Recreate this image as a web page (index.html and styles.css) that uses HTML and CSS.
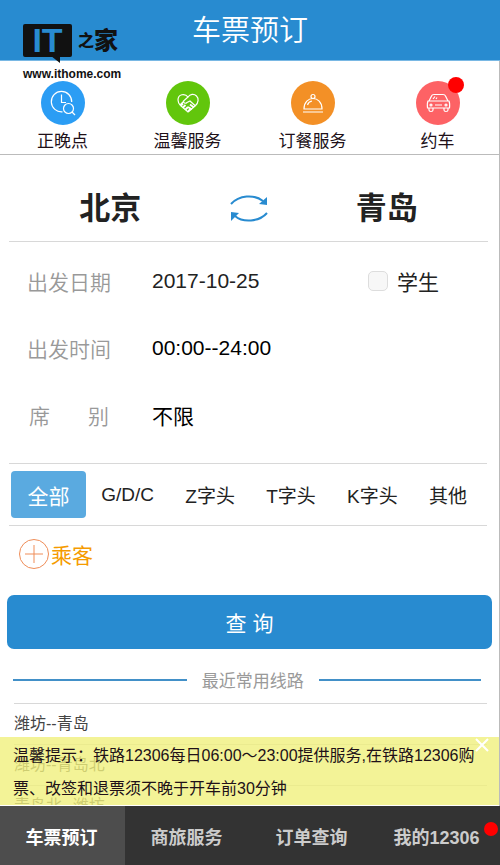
FILE: index.html
```html
<!DOCTYPE html>
<html lang="zh-CN">
<head>
<meta charset="utf-8">
<meta name="viewport" content="width=device-width, initial-scale=1">
<title>车票预订</title>
<link rel="stylesheet" href="styles.css">
</head>
<body>
<div class="app">
  <header class="header">
    <h1>车票预订</h1>
    <div class="brand">
      <div class="brand-row">
        <div class="brand-box">IT</div>
        <div class="brand-name"><span>之</span><b>家</b></div>
      </div>
      <div class="brand-url">www.ithome.com</div>
    </div>
  </header>

  <nav class="services" aria-label="服务">
    <a class="service" href="#">
      <span class="disc blue">
        <svg viewBox="0 0 44 44"><path d="M21.500 30.800A10.200 10.200 0 1 1 30.700 21"/><path d="M20.500 13.500V21.500H25"/><circle cx="27.500" cy="27.500" r="5"/><path d="M31 31L34 34"/></svg>
      </span>
      <span>正晚点</span>
    </a>
    <a class="service" href="#">
      <span class="disc green">
        <svg viewBox="0 0 44 44"><path d="M22 16C19 12 12 13 12 19C12 21 13 23 14.500 24.500L22 31L29.500 24.500C32.500 21.500 33 17.500 30.500 15C28 12.500 24 13 22 16Z"/><path d="M22 16L17.500 20C17 22 19.500 23 21 21.500L24 20L29.500 25M14 24L18 20"/><path class="thick" d="M15 24.500L17 22.500M17 26.500L19.500 24M19.500 28.500L22 26M22 30.500L24.500 28M24 23.500L28 26.500M22 26L26 28.500"/></svg>
      </span>
      <span>温馨服务</span>
    </a>
    <a class="service" href="#">
      <span class="disc orange">
        <svg viewBox="0 0 44 44"><circle cx="22" cy="15.500" r="2"/><path d="M13 28C13 14 31 14 31 28ZM16.500 24C17 22 18.500 20.500 21 20M12 31H32"/></svg>
      </span>
      <span>订餐服务</span>
    </a>
    <a class="service" href="#">
      <span class="disc pink">
        <svg viewBox="0 0 44 44"><path d="M13 20L15.500 15Q16 13.500 18 13.500H27Q29 13.500 29.500 15L32 20M12 20H33Q34 22 33.500 27H11.500Q11 22 12 20ZM13 27V29Q13 30.500 15 30.500Q17 30.500 17 29V27M28 27V29Q28 30.500 30 30.500Q32 30.500 32 29V27M19 24H26M17 18L19 15.500M20 18L21 16.500"/><circle cx="15" cy="24" r="1"/><circle cx="30" cy="24" r="1"/></svg>
        <i class="dot"></i>
      </span>
      <span>约车</span>
    </a>
  </nav>

  <main class="content">
    <section class="cities">
      <button class="city" type="button">北京</button>
      <button class="swap" type="button" aria-label="交换">
        <svg viewBox="0 0 40 30"><path d="M2 10C10 1 25 0 34 7"/><path d="M38 19C30 28 14 29 6 22"/><path class="head" d="M38 3V11L30 10ZM2 27V18L10 19Z"/></svg>
      </button>
      <button class="city" type="button">青岛</button>
    </section>

    <section class="fields">
      <div class="field">
        <span class="name">出发日期</span><span class="value soft">2017-10-25</span>
        <label class="student"><input type="checkbox">学生</label>
      </div>
      <div class="field"><span class="name">出发时间</span><span class="value">00:00--24:00</span></div>
      <div class="field"><span class="name split"><span>席</span><span>别</span></span><span class="value">不限</span></div>
    </section>

    <section class="types">
      <button class="type selected" type="button">全部</button>
      <button class="type" type="button">G/D/C</button>
      <button class="type" type="button">Z字头</button>
      <button class="type" type="button">T字头</button>
      <button class="type" type="button">K字头</button>
      <button class="type" type="button">其他</button>
    </section>

    <button class="passenger" type="button">
      <svg viewBox="0 0 32 32"><circle cx="16" cy="16" r="14.500"/><path d="M7 16H25M16 7V25"/></svg>乘客
    </button>

    <button class="search" type="button">查 询</button>

    <h2 class="recent">最近常用线路</h2>
    <ul class="routes">
      <li><a href="#">潍坊--青岛</a></li>
      <li><a href="#">潍坊--青岛北</a></li>
      <li><a href="#">青岛北--潍坊</a></li>
    </ul>

    <aside class="notice">
      <p>温馨提示：铁路12306每日06:00～23:00提供服务,在铁路12306购<br>票、改签和退票须不晚于开车前30分钟</p>
      <button class="close" type="button" aria-label="关闭"><svg viewBox="0 0 16 16"><path d="M2 2L14 14M14 2L2 14"/></svg></button>
    </aside>
  </main>

  <nav class="tabbar" aria-label="主导航">
    <a class="current" href="#">车票预订</a>
    <a href="#">商旅服务</a>
    <a href="#">订单查询</a>
    <a href="#">我的12306<i class="dot"></i></a>
  </nav>
</div>
</body>
</html>
```
FILE: styles.css
```css
* { box-sizing: border-box; }
body {
  margin: 0;
  background: #fff;
  color: #222;
  font-family: "Liberation Sans", "Noto Sans CJK SC", sans-serif;
}
button {
  padding: 0;
  border: 0;
  background: none;
  color: inherit;
  font: inherit;
}
a { color: inherit; text-decoration: none; }
svg { display: block; fill: none; stroke: #fff; }

.app {
  display: flex;
  flex-direction: column;
  height: 100vh;
  border-right: 1px solid #bbb;
}
.header {
  position: relative;
  flex: none;
  height: 61px;
  margin-right: -1px;
  background: #288bd0;
  border-bottom: 1px solid #79b8e4;
  color: #fff;
}
.header h1 {
  margin: 0;
  font-size: 29px;
  font-weight: 350;
  line-height: 62px;
  text-align: center;
}
.brand { position: absolute; top: 24px; left: 23px; color: #111; }
.brand-row { display: flex; gap: 6px; height: 40px; }
.brand-box {
  position: relative;
  width: 49px;
  height: 33px;
  border-radius: 2px;
  background: #111;
  color: #288bd0;
  font-size: 34px;
  font-weight: bold;
  line-height: 33px;
  text-align: center;
}
.brand-box::after {
  content: "";
  position: absolute;
  top: 32px;
  right: 12px;
  border-top: 7px solid #111;
  border-left: 9px solid transparent;
}
.brand-name { display: flex; align-items: center; height: 34px; font-weight: 900; line-height: 34px; }
.brand-name span { font-size: 16px; }
.brand-name b { font-size: 24px; }
.brand-url { font-size: 12px; font-weight: bold; line-height: 20px; }

.services {
  display: grid;
  grid-template-columns: repeat(4, 1fr);
  flex: none;
  height: 94px;
  margin-right: -1px;
  padding-top: 20px;
  border-bottom: 1px solid #bbb;
}
.service {
  display: flex;
  flex-direction: column;
  align-items: center;
  gap: 5px;
  color: #201018;
  font-size: 17px;
  line-height: 24px;
}
.disc { position: relative; width: 44px; height: 44px; border-radius: 50%; }
.disc svg { stroke-width: 1.2; }
.disc .thick { stroke-width: 1.8; }
.blue { background: #2b9df4; }
.green { background: #62c60c; }
.orange { background: #f39026; }
.pink { background: #fd6265; }
.dot {
  position: absolute;
  top: -4px;
  right: -4px;
  width: 16px;
  height: 16px;
  border-radius: 50%;
  background: #f00;
}

.content { position: relative; flex: 1; min-height: 0; overflow: hidden; }
.cities {
  display: grid;
  grid-template-columns: 1fr 74px 1fr;
  align-items: center;
  height: 87px;
  margin: 0 11px 0 9px;
  padding-top: 22px;
  border-bottom: 1px solid #d8d8d8;
}
.city { font-size: 31px; font-weight: bold; line-height: 46px; }
.swap { justify-self: center; width: 40px; height: 30px; }
.swap svg { stroke: #288bd0; stroke-width: 2; }
.swap .head { fill: #288bd0; stroke: none; }

.fields { padding: 5px 27px 15px; font-size: 21px; }
.field { display: flex; align-items: center; height: 67px; }
.name { width: 125px; color: #999; font-weight: 350; }
.split { display: flex; gap: 38px; padding-left: 2px; }
.value { flex: 1; color: #000; }
.field .soft { color: #222; }
.student { display: flex; align-items: center; gap: 9px; width: 104px; }
.student input {
  appearance: none;
  width: 20px;
  height: 20px;
  margin: 0;
  border: 1px solid #ddd;
  border-radius: 5px;
  background: #f7f7f7;
}

.types {
  display: flex;
  justify-content: space-between;
  align-items: center;
  height: 63px;
  margin: 0 12px 0 9px;
  padding: 0 20px 0 2px;
  border-top: 1px solid #d8d8d8;
  border-bottom: 1px solid #d8d8d8;
  font-size: 19px;
}
.selected {
  width: 75px;
  height: 47px;
  margin-right: -16px;
  border-radius: 4px;
  background: #5aaae0;
  color: #fff;
  font-size: 21px;
}
.passenger {
  display: flex;
  align-items: center;
  gap: 1px;
  height: 56px;
  padding-left: 18px;
  color: #f59b00;
  font-size: 21px;
}
.passenger svg { width: 32px; height: 32px; stroke: #ef8d58; }
.search {
  display: block;
  width: calc(100% - 14px);
  height: 54px;
  margin: 13px 7px 0;
  border-radius: 7px;
  background: #288bd0;
  color: #fff;
  font-size: 21px;
}
.recent {
  display: flex;
  align-items: center;
  gap: 15px;
  height: 54px;
  margin: 0;
  padding: 7px 18px 0 13px;
  color: #999;
  font-size: 17px;
  font-weight: 400;
}
.recent::before,
.recent::after { content: ""; flex: 15; height: 2px; background: #4290c8; }
.recent::after { flex-grow: 14; }
.routes { margin: 0 12px 0 14px; padding: 0; color: #444; font-size: 16px; list-style: none; }
.routes li { height: 41px; border-top: 1px solid #d8d8d8; line-height: 40px; }

.notice {
  position: absolute;
  right: 0;
  bottom: 0;
  left: 0;
  height: 69px;
  border-bottom: 1px solid #fff;
  background: rgba(240, 240, 125, 0.8);
  color: #201018;
  font-size: 16px;
  line-height: 33px;
}
.notice p { margin: 0; padding: 2px 0 0 13px; white-space: nowrap; }
.close { position: absolute; top: 0; right: 9px; width: 16px; height: 16px; }
.close svg { stroke-width: 2; }

.tabbar {
  display: grid;
  grid-template-columns: repeat(4, 1fr);
  flex: none;
  height: 59px;
  margin-right: -1px;
  background: #333;
  color: #ccc;
  font-size: 18px;
  font-weight: bold;
  line-height: 64px;
  text-align: center;
}
.tabbar a { position: relative; padding-right: 2px; }
.tabbar .current { background: #4d4d4d; color: #fff; }
.tabbar .dot { top: 16px; right: 2px; width: 14px; height: 14px; }
```
